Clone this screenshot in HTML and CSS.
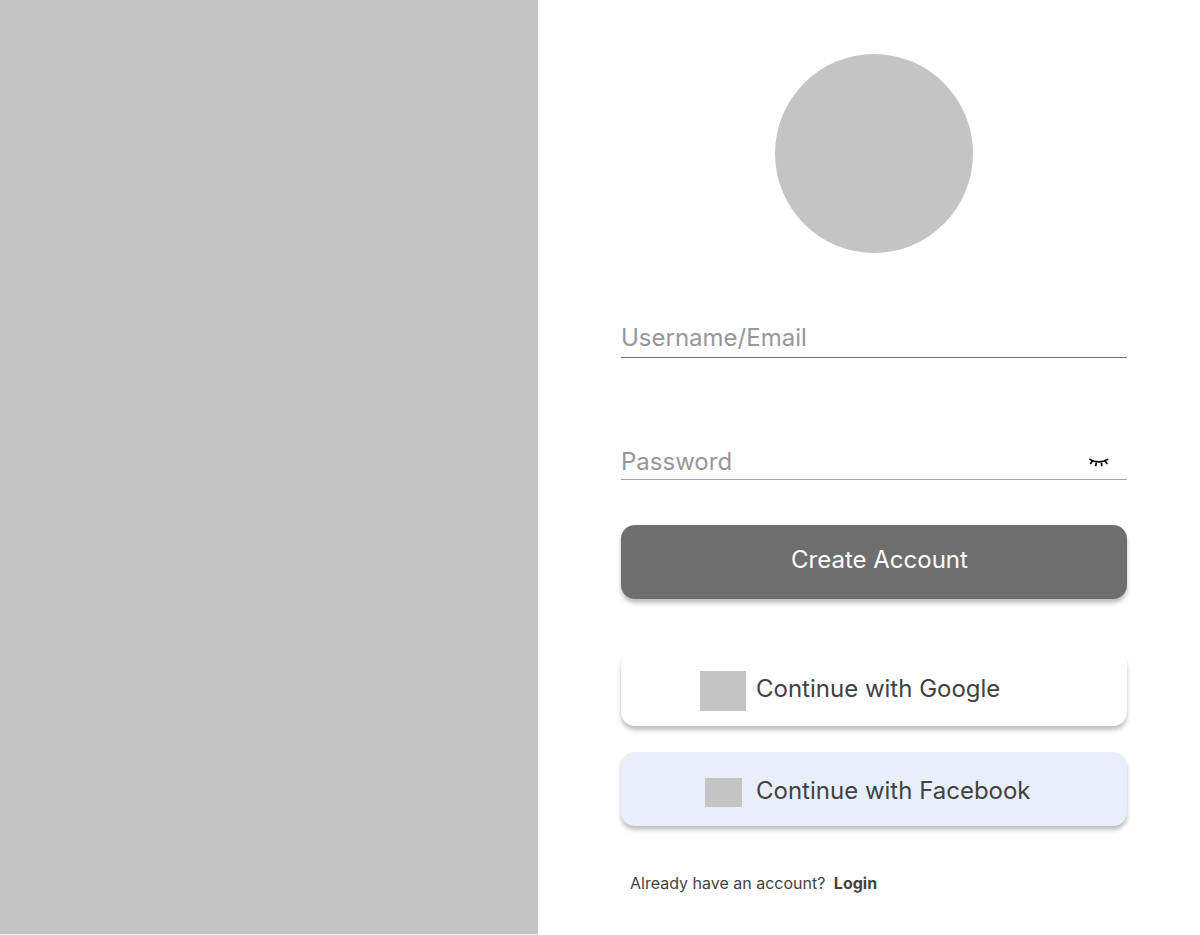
FILE: index.html
```html
<!DOCTYPE html>
<html lang="en">
<head>
<meta charset="utf-8">
<meta name="viewport" content="width=device-width, initial-scale=1">
<title>Create Account</title>
<link rel="stylesheet" href="styles.css">
</head>
<body>
<div class="page">
  <aside class="cover"></aside>
  <main class="panel">
    <div class="logo"></div>
    <form class="form">
      <div class="field field-user">
        <input class="input" type="text" placeholder="Username/Email" aria-label="Username/Email">
      </div>
      <div class="field field-password">
        <input class="input" type="password" placeholder="Password" aria-label="Password">
        <button class="toggle" type="button" aria-label="Show password">
          <svg width="20" height="10" viewBox="0 0 20 10" fill="none" stroke="#000" stroke-width="1.7" stroke-linecap="round">
            <path d="M0.9 2.4C5.5 5.7 14 5.7 18.6 2.4M3.4 4.1L1.6 6.4M7.4 5L6.8 8.5M12.2 5L12.8 8.5M16.1 4.1L17.9 6.4"/>
          </svg>
        </button>
      </div>
      <button class="button create" type="submit">Create Account</button>
      <button class="button social google" type="button">
        <span class="slot"><span class="mark mark-google"></span></span>
        <span>Continue with Google</span>
      </button>
      <button class="button social facebook" type="button">
        <span class="slot"><span class="mark mark-facebook"></span></span>
        <span>Continue with Facebook</span>
      </button>
    </form>
    <p class="signin">Already have an account? <a class="login" href="#login">Login</a></p>
  </main>
</div>
</body>
</html>
```
FILE: styles.css
```css
* {
  box-sizing: border-box;
}

body {
  margin: 0;
  background: #fff;
  color: #424242;
  font-family: Inter, "Liberation Sans", sans-serif;
}

.page {
  display: grid;
  grid-template-columns: 538fr 662fr;
  min-height: 100vh;
}

.cover {
  background: #c4c4c4;
  border-bottom: 1px solid #efefef;
}

.panel {
  padding: 54px 73px 32px 83px;
}

.logo {
  width: 198px;
  height: 199px;
  margin: 0 auto;
  border-radius: 50%;
  background: #c4c4c4;
}

.form {
  display: flex;
  flex-direction: column;
  margin-top: 65px;
}

.field {
  display: flex;
  align-items: center;
  border-bottom: 1px solid #707070;
}

.field-user {
  height: 40px;
}

.field-password {
  height: 36px;
  margin-top: 86px;
  padding-right: 18px;
  border-bottom-color: #a3a3a3;
}

.input {
  flex: 1;
  min-width: 0;
  padding: 0;
  border: 0;
  outline: 0;
  background: transparent;
  color: #424242;
  font: inherit;
  font-size: 24px;
  line-height: 32px;
}

.input::placeholder {
  color: #979797;
  opacity: 1;
}

.toggle {
  display: flex;
  padding: 0;
  border: 0;
  background: transparent;
  cursor: pointer;
}

.button {
  display: flex;
  align-items: center;
  height: 74px;
  border: 0;
  border-radius: 14px;
  box-shadow: 0 4px 4px rgba(0, 0, 0, 0.25);
  color: #424242;
  font: inherit;
  font-size: 24px;
  line-height: 32px;
  cursor: pointer;
}

.create {
  justify-content: center;
  margin-top: 45px;
  padding: 0 0 4px 11px;
  background: #6e6e6e;
  color: #fff;
}

.social {
  gap: 10px;
  padding: 0 0 0 79px;
}

.google {
  margin-top: 53px;
  background: #fff;
}

.facebook {
  margin-top: 26px;
  padding-top: 4px;
  background: #e8eefa;
}

.slot {
  display: flex;
  justify-content: center;
  width: 46px;
  padding-top: 3px;
}

.mark {
  background: #c4c4c4;
}

.mark-google {
  width: 46px;
  height: 40px;
}

.mark-facebook {
  width: 37px;
  height: 29px;
}

.signin {
  margin: 45px 0 0;
  padding-left: 9px;
  font-size: 16px;
  line-height: 24px;
}

.login {
  margin-left: 4px;
  color: inherit;
  font-weight: 700;
  text-decoration: none;
}
```
